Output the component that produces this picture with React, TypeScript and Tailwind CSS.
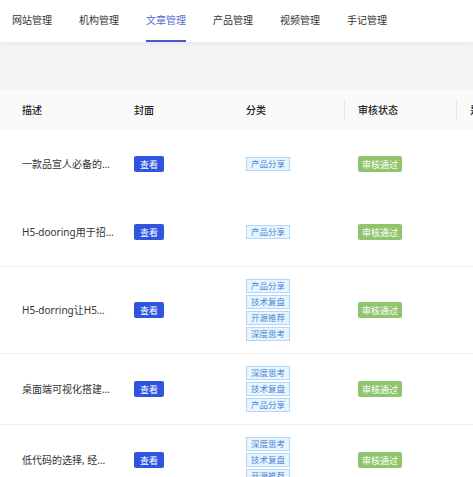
import React from "react";

type Row = {
  title: string;
  tags: string[];
};

const tabs = ["网站管理", "机构管理", "文章管理", "产品管理", "视频管理", "手记管理"];

const rows: Row[] = [
  { title: "一款品宣人必备的…", tags: ["产品分享"] },
  { title: "H5-dooring用于招…", tags: ["产品分享"] },
  { title: "H5-dorring让H5…", tags: ["产品分享", "技术复盘", "开源推荐", "深度思考"] },
  { title: "桌面端可视化搭建…", tags: ["深度思考", "技术复盘", "产品分享"] },
  { title: "低代码的选择, 经…", tags: ["深度思考", "技术复盘", "开源推荐"] },
];

const font = { fontFamily: '"Noto Sans", "Noto Sans CJK SC", sans-serif' };

export default function App() {
  return (
    <div style={font} className="h-[477px] w-[473px] overflow-hidden bg-white text-[#333]">
      <nav className="relative z-10 flex h-[42px] gap-[27px] bg-white pl-[12px] shadow-[0_1px_4px_rgba(0,0,0,0.07)]">
        {tabs.map((tab) => {
          const active = tab === "文章管理";
          return (
            <div key={tab} className="relative flex h-full items-center pb-[2px]">
              <span className={active ? "text-[10px] text-[#5865d6]" : "text-[10px] text-[#333]"}>{tab}</span>
              {active ? <span className="absolute bottom-0 left-0 h-[2px] w-full bg-[#4b56c8]" /> : null}
            </div>
          );
        })}
      </nav>

      <div className="h-[48px] bg-[#f2f3f5]" />

      <div className="w-[568px]">
        <div className="grid h-[40px] grid-cols-[112px_112px_112px_112px_112px] items-center bg-[#fafafa] pl-[8px] text-[10px] font-medium text-[#222]">
          <div className="px-[14px]">描述</div>
          <div className="px-[14px]">封面</div>
          <div className="px-[14px]">分类</div>
          <div className="relative px-[14px]">
            <span className="absolute left-0 top-1/2 h-[22px] w-px -translate-y-1/2 bg-[#e6e6e6]" />
            审核状态
          </div>
          <div className="relative px-[14px]">
            <span className="absolute left-0 top-1/2 h-[22px] w-px -translate-y-1/2 bg-[#e6e6e6]" />
            是否推荐
          </div>
        </div>

        {rows.map((row, index) => (
          <div
            key={row.title}
            className={
              index >= 2
                ? "grid min-h-[68px] grid-cols-[112px_112px_112px_112px_112px] items-center border-t border-[#eeeeee] py-[12px] pl-[8px]"
                : "grid min-h-[68px] grid-cols-[112px_112px_112px_112px_112px] items-center py-[12px] pl-[8px]"
            }
          >
            <div className="whitespace-nowrap px-[14px] text-[10px] text-[#333]">{row.title}</div>
            <div className="flex px-[14px]">
              <button className="flex h-[16px] items-center rounded-[2px] bg-[#2f54e0] px-[6px] text-[9px] leading-none text-white">
                查看
              </button>
            </div>
            <div className="flex flex-col items-start gap-[2px] px-[14px]">
              {row.tags.map((tag) => (
                <span
                  key={tag}
                  className="flex h-[14px] items-center border border-[#b3d7f5] bg-[#e8f4ff] px-[4px] text-[8.5px] leading-none text-[#4a85d4]"
                >
                  {tag}
                </span>
              ))}
            </div>
            <div className="flex px-[14px]">
              <span className="flex h-[16px] items-center rounded-[2px] bg-[#8fc56c] px-[4px] text-[9px] leading-none text-white">
                审核通过
              </span>
            </div>
            <div className="px-[14px]" />
          </div>
        ))}
      </div>
    </div>
  );
}
